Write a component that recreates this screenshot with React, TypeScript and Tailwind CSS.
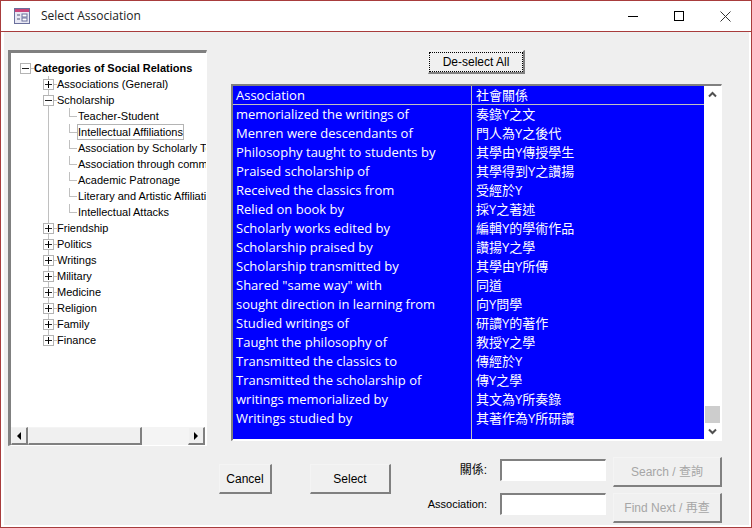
import React from 'react';

const associations = [
    ['memorialized the writings of', '奏錄Y之文'],
    ['Menren were descendants of', '門人為Y之後代'],
    ['Philosophy taught to students by', '其學由Y傳授學生'],
    ['Praised scholarship of', '其學得到Y之讚揚'],
    ['Received the classics from', '受經於Y'],
    ['Relied on book by', '採Y之著述'],
    ['Scholarly works edited by', '編輯Y的學術作品'],
    ['Scholarship praised by', '讚揚Y之學'],
    ['Scholarship transmitted by', '其學由Y所傳'],
    ['Shared "same way" with', '同道'],
    ['sought direction in learning from', '向Y問學'],
    ['Studied writings of', '研讀Y的著作'],
    ['Taught the philosophy of', '教授Y之學'],
    ['Transmitted the classics to', '傳經於Y'],
    ['Transmitted the scholarship of', '傳Y之學'],
    ['writings memorialized by', '其文為Y所奏錄'],
    ['Writings studied by', '其著作為Y所研讀'],
];

const leaves = [
    'Teacher-Student',
    'Intellectual Affiliations',
    'Association by Scholarly Topic',
    'Association through common',
    'Academic Patronage',
    'Literary and Artistic Affiliations',
    'Intellectual Attacks',
];

const closedGroups = ['Friendship', 'Politics', 'Writings', 'Military', 'Medicine', 'Religion', 'Family', 'Finance'];

const raised = 'border border-t-[#f4f4f4] border-l-[#f4f4f4] border-r-2 border-b-2 border-r-[#808080] border-b-[#808080] bg-[#f0f0f0]';
const sunken = 'border-t-2 border-l-2 border-r border-b border-t-[#808080] border-l-[#808080] border-r-white border-b-white';

function Expander({ open = false, bold = false }: { open?: boolean; bold?: boolean }) {
    return (
        <span className="relative z-10 flex h-[11px] w-[11px] shrink-0 items-center justify-center border border-[#b4b4b4] bg-white">
            <span className={`absolute h-px w-[7px] ${bold ? 'bg-black' : 'bg-[#222222]'}`} />
            {!open && <span className="absolute h-[7px] w-px bg-black" />}
        </span>
    );
}

function Group({ label, open = false, last = false }: { label: string; open?: boolean; last?: boolean }) {
    return (
        <div className="relative flex h-4 items-center pl-[32px]">
            <span className={`absolute left-[37px] top-0 w-px bg-[#c0c0c0] ${last ? 'h-2' : 'h-4'}`} />
            <Expander open={open} />
            <span className="h-px w-[3px] bg-[#c0c0c0]" />
            <span className="whitespace-nowrap">{label}</span>
        </div>
    );
}

function Leaf({ label, selected = false }: { label: string; selected?: boolean }) {
    return (
        <div className="relative flex h-4 items-center pl-[58px]">
            <span className="absolute left-[37px] top-0 h-4 w-px bg-[#c0c0c0]" />
            <span className="absolute left-[58px] top-0 h-2 w-px bg-[#c0c0c0]" />
            <span className="h-px w-2 shrink-0 bg-[#c0c0c0]" />
            <span className={`whitespace-nowrap ${selected ? 'border border-[#b4b4b4] leading-[14px]' : 'border border-transparent leading-[14px]'}`}>{label}</span>
        </div>
    );
}

function TreePanel() {
    return (
        <div className={`flex h-[396px] w-[199px] shrink-0 flex-col border-t-[3px] border-l-[3px] border-r border-b border-t-[#808080] border-l-[#808080] border-r-white border-b-white`}>
            <div className="relative flex-1 overflow-hidden bg-white pt-[7px] text-[11px] leading-4 text-black">
                <div className="relative flex h-4 items-center pl-[9px]">
                    <Expander open />
                    <span className="h-px w-[3px] bg-[#c0c0c0]" />
                    <span className="whitespace-nowrap font-bold">Categories of Social Relations</span>
                </div>
                <Group label="Associations (General)" />
                <Group label="Scholarship" open />
                {leaves.map((leaf, i) => (
                    <Leaf key={leaf} label={leaf} selected={i === 1} />
                ))}
                {closedGroups.map((g, i) => (
                    <Group key={g} label={g} last={i === closedGroups.length - 1} />
                ))}
            </div>
            <div className="flex h-[18px] items-stretch bg-white pr-px">
                <button className={`flex w-[17px] items-center justify-center ${raised}`}>
                    <span className="h-0 w-0 border-y-4 border-r-4 border-y-transparent border-r-black" />
                </button>
                <div className={`w-[114px] ${raised}`} />
                <div className="flex-1 bg-[#f4f4f4]" />
                <button className={`flex w-[17px] items-center justify-center ${raised}`}>
                    <span className="h-0 w-0 border-y-4 border-l-4 border-y-transparent border-l-black" />
                </button>
            </div>
        </div>
    );
}

function Chevron({ up = false }: { up?: boolean }) {
    return (
        <svg width="9" height="7" viewBox="0 0 9 7" fill="none" stroke="#505050" strokeWidth="2">
            <path d={up ? 'M1 5.5 L4.5 2 L8 5.5' : 'M1 1.5 L4.5 5 L8 1.5'} />
        </svg>
    );
}

function ListPanel() {
    return (
        <div className={`ml-[12px] flex h-[357px] w-[491px] ${sunken}`}>
            <div className="flex-1 bg-white pb-px">
                <div className="h-full w-full bg-[#0000ff] text-[13px] leading-[19px] text-white" style={{ fontFamily: '"Open Sans", "Noto Sans CJK TC", sans-serif' }}>
                    <div className="flex h-[19px] border-b border-[#c0c0c0]">
                        <div className="w-[239px] border-r border-[#c0c0c0] pl-[3px]">Association</div>
                        <div className="pl-[4px]">社會關係</div>
                    </div>
                    <div className="flex h-[334px]">
                        <div className="w-[239px] border-r border-[#c0c0c0] pl-[3px]">
                            {associations.map(([en]) => (
                                <div key={en} className="h-[19px] whitespace-nowrap">{en}</div>
                            ))}
                        </div>
                        <div className="pl-[4px]">
                            {associations.map(([en, zh]) => (
                                <div key={en} className="h-[19px] whitespace-nowrap">{zh}</div>
                            ))}
                        </div>
                    </div>
                </div>
            </div>
            <div className="flex w-[17px] flex-col items-center bg-white">
                <div className="flex h-[17px] items-center justify-center">
                    <Chevron up />
                </div>
                <div className="flex-1" />
                <div className="h-[17px] w-[15px] bg-[#cdcdcd]" />
                <div className="flex h-[17px] items-center justify-center">
                    <Chevron />
                </div>
            </div>
        </div>
    );
}

function Field({ label, className }: { label: string; className: string }) {
    return (
        <div className="flex items-center">
            <span className={`text-right text-black ${className}`}>{label}</span>
            <div className={`ml-[13px] h-[22px] w-[106px] bg-white ${sunken}`} />
        </div>
    );
}

export default function App() {
    return (
        <div className="flex h-[528px] w-[752px] flex-col border border-x-[#a83c3c] border-y-[#a83c3c] bg-white" style={{ fontFamily: '"Liberation Sans", "Noto Sans CJK TC", sans-serif' }}>
            {/* Title bar */}
            <div className="flex h-[31px] shrink-0 items-center border-b border-[#a83c3c] pl-[13px]">
                <svg width="16" height="16" viewBox="0 0 16 16">
                    <rect x="0.5" y="0.5" width="15" height="15" fill="#e8e8f4" stroke="#6a6f9c" />
                    <rect x="1" y="1" width="14" height="3" fill="#c8457a" />
                    <path d="M3 7h3M3 11h3" stroke="#555577" />
                    <rect x="8" y="6" width="5" height="3" fill="#fff" stroke="#6a6f9c" />
                    <rect x="8" y="10" width="5" height="3" fill="#fff" stroke="#6a6f9c" />
                </svg>
                <span className="ml-[11px] text-[12px] text-[#222222]" style={{ fontFamily: '"Open Sans", sans-serif' }}>Select Association</span>
                <div className="ml-auto flex items-center pr-[3px]">
                    <div className="flex h-[30px] w-[46px] items-center justify-center">
                        <span className="h-px w-[10px] bg-black" />
                    </div>
                    <div className="flex h-[30px] w-[46px] items-center justify-center">
                        <span className="h-[10px] w-[10px] border border-black" />
                    </div>
                    <div className="flex h-[30px] w-[46px] items-center justify-center">
                        <svg width="11" height="11" viewBox="0 0 11 11" stroke="#333333" fill="none">
                            <path d="M0.5 0.5 L10.5 10.5 M10.5 0.5 L0.5 10.5" />
                        </svg>
                    </div>
                </div>
            </div>

            {/* Client area */}
            <div className="flex flex-1 bg-white pb-[2px] pl-[3px] pr-[2px]">
                <div className="flex flex-1 bg-[#efefef] pl-[4px] pt-[18px]">
                    <TreePanel />
                    <div className="ml-[12px] flex flex-col">
                        <div className="flex h-[24px] justify-center pl-[12px]">
                            <button className={`w-[97px] text-[12px] text-black ${raised}`}>
                                <span className="block border border-dotted border-black leading-[18px]">De-select All</span>
                            </button>
                        </div>
                        <div className="mt-[10px]">
                            <ListPanel />
                        </div>
                        <div className="mt-[23px] flex text-[12px]">
                            <button className={`h-[30px] w-[53px] text-black ${raised}`}>Cancel</button>
                            <button className={`ml-[38px] h-[30px] w-[81px] text-black ${raised}`}>Select</button>
                            <div className="ml-[35px] flex -mt-[5px] flex-col gap-[12px] text-[11px]">
                                <Field label="關係:" className="w-[61px] text-[12px]" />
                                <Field label="Association:" className="w-[61px]" />
                            </div>
                            <div className="ml-[7px] -mt-[7px] flex flex-col gap-[6px] text-[12px] text-[#a6a6a6]">
                                <button className={`h-[30px] w-[109px] ${raised}`}>Search / 查詢</button>
                                <button className={`h-[30px] w-[109px] ${raised}`}>Find Next / 再查</button>
                            </div>
                        </div>
                    </div>
                </div>
            </div>
        </div>
    );
}
